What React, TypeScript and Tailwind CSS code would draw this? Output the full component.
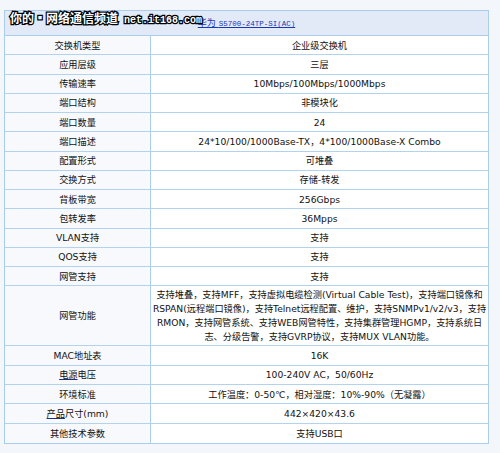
const rows: { label: React.ReactNode; value: React.ReactNode; tall?: boolean }[] = [
  { label: "交换机类型", value: "企业级交换机" },
  { label: "应用层级", value: "三层" },
  { label: "传输速率", value: "10Mbps/100Mbps/1000Mbps" },
  { label: "端口结构", value: "非模块化" },
  { label: "端口数量", value: "24" },
  { label: "端口描述", value: "24*10/100/1000Base-TX，4*100/1000Base-X Combo" },
  { label: "配置形式", value: "可堆叠" },
  { label: "交换方式", value: "存储-转发" },
  { label: "背板带宽", value: "256Gbps" },
  { label: "包转发率", value: "36Mpps" },
  { label: "VLAN支持", value: "支持" },
  { label: "QOS支持", value: "支持" },
  { label: "网管支持", value: "支持" },
  {
    label: "网管功能",
    tall: true,
    value: (
      <>
        支持堆叠，支持MFF，支持虚拟电缆检测(Virtual Cable Test)，支持端口镜像和
        <br />
        RSPAN(远程端口镜像)，支持Telnet远程配置、维护，支持SNMPv1/v2/v3，支持
        <br />
        RMON，支持网管系统、支持WEB网管特性，支持集群管理HGMP，支持系统日
        <br />
        志、分级告警，支持GVRP协议，支持MUX VLAN功能。
      </>
    ),
  },
  { label: "MAC地址表", value: "16K" },
  {
    label: (
      <>
        <span className="underline decoration-[#1c2f8c]">电源</span>电压
      </>
    ),
    value: "100-240V AC，50/60Hz",
  },
  { label: "环境标准", value: "工作温度：0-50℃，相对湿度：10%-90%（无凝露）" },
  {
    label: (
      <>
        <span className="underline decoration-[#1c2f8c]">产品</span>尺寸(mm)
      </>
    ),
    value: "442×420×43.6",
  },
  { label: "其他技术参数", value: "支持USB口" },
];

export default function App() {
  return (
    <div className="relative w-[500px] h-[453px] bg-[#f3f7fc] pt-[10px] pl-[4px] text-[#111] font-['DejaVu_Sans','Noto_Sans_CJK_SC',sans-serif]">
      <div className="w-[485px] border border-[#a9cdea] bg-white">
        <div className="h-[25px] flex items-center justify-center bg-[#e2eaf8] border-b border-[#a9cdea] pt-[2px]">
          <a className="text-[#1a35b8] underline text-[9px] leading-none">
            华为 <span className="font-['Liberation_Mono',monospace] text-[7.5px]">S5700-24TP-SI(AC)</span>
          </a>
        </div>
        {rows.map((r, i) => (
          <div
            key={i}
            className={`flex text-[9.2px] ${r.tall ? "h-[60px] leading-[14px]" : "h-[19.28px] leading-none"} ${
              i < rows.length - 1 ? "border-b border-[#b3d2ee]" : ""
            }`}
          >
            <div className="w-[146px] shrink-0 bg-[#f7f9fd] border-r border-[#a9cdea] flex items-center justify-center">
              {r.label}
            </div>
            <div className="flex-1 flex items-center justify-center text-center whitespace-nowrap">
              <div>{r.value}</div>
            </div>
          </div>
        ))}
      </div>
      <div className="absolute left-[10px] top-[9px] flex items-baseline gap-[6px] text-white font-bold [-webkit-text-stroke:2.5px_#000] [paint-order:stroke_fill]">
        <span className="text-[12px] font-['Noto_Sans_CJK_SC',sans-serif]">你的▪网络通信频道</span>
        <span className="text-[10px] font-['Liberation_Mono',monospace]">net.it168.com</span>
      </div>
    </div>
  );
}
